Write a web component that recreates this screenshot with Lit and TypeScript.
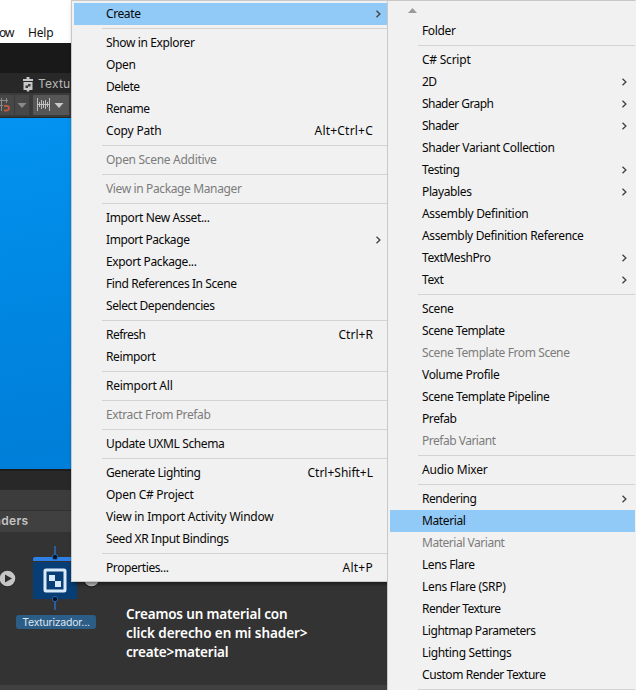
import { LitElement, html, css, nothing } from "lit";
import { customElement, property } from "lit/decorators.js";

interface Item {
  label: string;
  width: number;
  keys?: string;
  keysWidth?: number;
  sub?: boolean;
  off?: boolean;
  on?: boolean;
}
type Entry = Item | null;

const it = (label: string, width: number, extra: Partial<Item> = {}): Item => ({ label, width, ...extra });
const SUB = { sub: true };
const OFF = { off: true };

const assetMenu: Entry[] = [
  it("Create", 34, { sub: true, on: true }),
  null,
  it("Show in Explorer", 88),
  it("Open", 29),
  it("Delete", 33),
  it("Rename", 43),
  it("Copy Path", 55, { keys: "Alt+Ctrl+C", keysWidth: 58 }),
  null,
  it("Open Scene Additive", 110, OFF),
  null,
  it("View in Package Manager", 135, OFF),
  null,
  it("Import New Asset...", 103),
  it("Import Package", 83, SUB),
  it("Export Package...", 90),
  it("Find References In Scene", 130),
  it("Select Dependencies", 108),
  null,
  it("Refresh", 39, { keys: "Ctrl+R", keysWidth: 34 }),
  it("Reimport", 49),
  null,
  it("Reimport All", 66),
  null,
  it("Extract From Prefab", 104, OFF),
  null,
  it("Update UXML Schema", 118),
  null,
  it("Generate Lighting", 94, { keys: "Ctrl+Shift+L", keysWidth: 65 }),
  it("Open C# Project", 87),
  it("View in Import Activity Window", 167),
  it("Seed XR Input Bindings", 122),
  null,
  it("Properties...", 62, { keys: "Alt+P", keysWidth: 30 }),
];

const createMenu: Entry[] = [
  it("Folder", 33),
  null,
  it("C# Script", 48),
  it("2D", 14, SUB),
  it("Shader Graph", 71, SUB),
  it("Shader", 36, SUB),
  it("Shader Variant Collection", 132),
  it("Testing", 37, SUB),
  it("Playables", 49, SUB),
  it("Assembly Definition", 106),
  it("Assembly Definition Reference", 161),
  it("TextMeshPro", 68, SUB),
  it("Text", 21, SUB),
  null,
  it("Scene", 31),
  it("Scene Template", 82),
  it("Scene Template From Scene", 147, OFF),
  it("Volume Profile", 77),
  it("Scene Template Pipeline", 127),
  it("Prefab", 34),
  it("Prefab Variant", 73, OFF),
  null,
  it("Audio Mixer", 65),
  null,
  it("Rendering", 54, SUB),
  it("Material", 43, { on: true }),
  it("Material Variant", 82, OFF),
  it("Lens Flare", 52),
  it("Lens Flare (SRP)", 83),
  it("Render Texture", 78),
  it("Lightmap Parameters", 113),
  it("Lighting Settings", 89),
  it("Custom Render Texture", 123),
  null,
];

/** A single line of text whose tracking is tuned to a given width. */
@customElement("fit-text")
class FitText extends LitElement {
  @property() text = "";
  @property({ type: Number }) width = 0;
  static styles = css`
    :host { display: inline-block; white-space: nowrap; }
    span { display: inline-block; }
  `;
  render() {
    return html`<span>${this.text}</span>`;
  }
  updated() {
    const el = this.renderRoot.querySelector("span") as HTMLElement;
    el.style.letterSpacing = "0px";
    const natural = el.getBoundingClientRect().width;
    el.style.letterSpacing = `${(this.width + 0.5 - natural) / this.text.length}px`;
  }
}

@customElement("context-menu")
class ContextMenu extends LitElement {
  @property({ attribute: false }) entries: Entry[] = [];
  static styles = css`
    :host {
      display: block;
      box-sizing: border-box;
      background: #f1f1f1;
      border: 1px solid #c8c8c8;
      font: 12px/22px "Noto Sans", "Open Sans", sans-serif;
      color: #080808;
    }
    .row {
      display: flex;
      align-items: center;
      height: 22px;
      margin-left: 2px;
      padding-left: 32px;
      box-sizing: border-box;
    }
    .label { flex: 1; }
    .on { background: #91c9f7; }
    .off { color: #7c7c7c; }
    .keys { margin-right: 14px; }
    .chev { width: 6px; height: 10px; margin-right: var(--chev-gap, 6px); fill: none; stroke: #404040; stroke-width: 1.3; }
    .sep { height: 1px; margin: 3px 0 3px 30px; background: #d3d3d3; }
  `;
  render() {
    return html`<slot></slot>${this.entries.map((e) =>
      e === null
        ? html`<div class="sep"></div>`
        : html`<div class="row ${e.on ? "on" : ""} ${e.off ? "off" : ""}">
            <fit-text class="label" .text=${e.label} .width=${e.width}></fit-text>
            ${e.keys ? html`<fit-text class="keys" .text=${e.keys} .width=${e.keysWidth ?? 0}></fit-text>` : nothing}
            ${e.sub ? html`<svg class="chev" viewBox="0 0 6 10"><path d="M1.500 1.700L4.900 5L1.500 8.300" /></svg>` : nothing}
          </div>`
    )}`;
  }
}

@customElement("app-root")
class AppRoot extends LitElement {
  static styles = css`
    :host {
      display: block;
      position: relative;
      width: 636px;
      height: 690px;
      overflow: hidden;
      background: #333;
      font-family: "Noto Sans", "Open Sans", sans-serif;
    }
    .editor { display: flex; flex-direction: column; height: 690px; }
    .menubar { height: 43px; box-sizing: border-box; padding-top: 25px; background: #fff; color: #111; font-size: 12px; line-height: 16px; display: flex; }
    .ow { width: 29px; margin-left: -1px; }
    .strip { height: 30px; background: #191919; }
    .tabs { height: 20px; background: #282828; display: flex; align-items: center; padding-left: 22px; gap: 4px; color: #b9b9b9; font: 12px/20px Inter, sans-serif; }
    .tabs span { padding-top: 1px; letter-spacing: 0.2px; }
    .tabs svg { margin-top: 1px; }
    .tools { height: 25px; background: #3a3a3a; border-bottom: 1px solid #252525; box-sizing: border-box; }
    .sky { height: 351px; background: linear-gradient(172deg, #0393f0 0%, #0089e5 35%, #007fd9 75%, #0080dc 100%); }
    .gap { height: 21px; background: #282828; border-top: 2px solid #1c1c1c; box-sizing: border-box; }
    .bar { height: 21px; background: #3c3c3c; border-bottom: 1px solid #303030; box-sizing: border-box; }
    .crumbs { height: 21px; background: #404040; color: #c4c4c4; font: 600 12px/20px Inter, sans-serif; }
    .crumbs fit-text { margin-left: -6px; }
    .canvas { flex: 1; background: #333; }
    .foot { height: 5px; background: #404040; }
    .node { position: absolute; left: 0; top: 540px; width: 110px; height: 75px; }
    .name {
      position: absolute; left: 16px; top: 615px; width: 80px; height: 14px;
      border-radius: 3px; background: #2c5d87; color: #dce6ee; text-align: center;
      font: 10.5px/16px Inter, sans-serif;
    }
    .note { position: absolute; left: 126px; top: 605px; color: #fff; font: 600 13.5px/19px "Noto Sans", sans-serif; }
    .note fit-text { display: block; }
    .assets { position: absolute; left: 71px; top: 0; width: 317px; height: 582px; padding-top: 2px; box-shadow: 2px 2px 4px rgba(0, 0, 0, 0.5); }
    .create { position: absolute; left: 387px; top: 0; width: 249px; height: 690px; overflow: hidden; border-right-color: #f1f1f1; border-bottom: 0; --chev-gap: 8px; }
    .up { display: block; width: 9px; height: 5px; margin: 7px 0 7px 20px; fill: #9b9b9b; }
  `;
  render() {
    return html`
      <div class="editor">
        <div class="menubar">
          <fit-text class="ow" .text=${"ow"} .width=${14}></fit-text>
          <fit-text .text=${"Help"} .width=${25}></fit-text>
        </div>
        <div class="strip"></div>
        <div class="tabs">
          <svg width="12" height="16" viewBox="0 0 12 16">
            <path fill="#c8c8c8" d="M1 3h3.500V1h3v2H11v2H1zM1.500 6h9v8H7.300v1.500H4.700V14H1.500z" />
            <path d="M3.500 12V9.500H6V8H8.500V10.500H6V12z" fill="#3a3a3a" />
          </svg>
          <span>Textu</span>
        </div>
        <div class="tools">
          <svg width="71" height="24" viewBox="0 93 71 24">
            <rect x="0" y="95" width="14" height="20" fill="#474747" />
            <rect x="15" y="95" width="14" height="20" fill="#474747" />
            <rect x="33" y="95" width="36" height="20" rx="1" fill="#565656" />
            <path d="M0 100.500H8M1.500 98V111M6.500 98V103M0 105.500H3" stroke="#8b8b8b" fill="none" />
            <path d="M4 106H6.500Q9 106 9 108.300Q9 110.500 6.500 110.500H4" stroke="#b85b42" stroke-width="1.800" fill="none" />
            <path d="M17.500 103h9l-4.500 5z" fill="#8b8b8b" />
            <path d="M37.500 98V111M49.500 98V111M39.500 102V107M41.500 100V109M43.500 101V108M45.500 100V109M47.500 102V107M37 104.500H50" stroke="#c9c9c9" stroke-width="0.900" fill="none" />
            <path d="M54.500 103h9l-4.500 5z" fill="#c9c9c9" />
          </svg>
        </div>
        <div class="sky"></div>
        <div class="gap"></div>
        <div class="bar"></div>
        <div class="crumbs"><fit-text .text=${"aders"} .width=${34}></fit-text></div>
        <div class="canvas"></div>
        <div class="foot"></div>
      </div>
      <svg class="node" viewBox="0 540 110 75">
        <circle cx="7.500" cy="579" r="8.200" fill="#272727" />
        <circle cx="7.500" cy="578.500" r="7.800" fill="#c6c6c6" />
        <path d="M5 574.500v8l7-4z" fill="#303030" />
        <circle cx="91.500" cy="579.500" r="8" fill="#242424" />
        <circle cx="91.500" cy="578.500" r="7.800" fill="#c6c6c6" />
        <rect x="33" y="562" width="44" height="37" fill="#073e75" />
        <path d="M33 561V559Q33 557 35 557H77V561z" fill="#2f80e6" />
        <path d="M55 546V557M55 600V610" stroke="#286cc0" stroke-width="1.500" />
        <circle cx="55" cy="557" r="2.700" fill="#061426" stroke="#2464ad" stroke-width="1" />
        <circle cx="55" cy="599" r="2.700" fill="#061426" stroke="#2464ad" stroke-width="1" />
        <rect x="45" y="570" width="20" height="21" rx="1" fill="#073e75" stroke="#d9ebfa" stroke-width="3" />
        <path d="M49 575h6v6h6v6h-6v-6h-6z" fill="#d9ebfa" />
      </svg>
      <div class="name"><fit-text .text=${"Texturizador..."} .width=${67}></fit-text></div>
      <div class="note">
        <fit-text .text=${"Creamos un material con"} .width=${161}></fit-text>
        <fit-text .text=${"click derecho en mi shader>"} .width=${181}></fit-text>
        <fit-text .text=${"create>material"} .width=${102}></fit-text>
      </div>
      <context-menu class="assets" .entries=${assetMenu}></context-menu>
      <context-menu class="create" .entries=${createMenu}>
        <svg class="up" viewBox="0 0 9 5"><path d="M0 5L4.500 0L9 5z" /></svg>
      </context-menu>
    `;
  }
}
